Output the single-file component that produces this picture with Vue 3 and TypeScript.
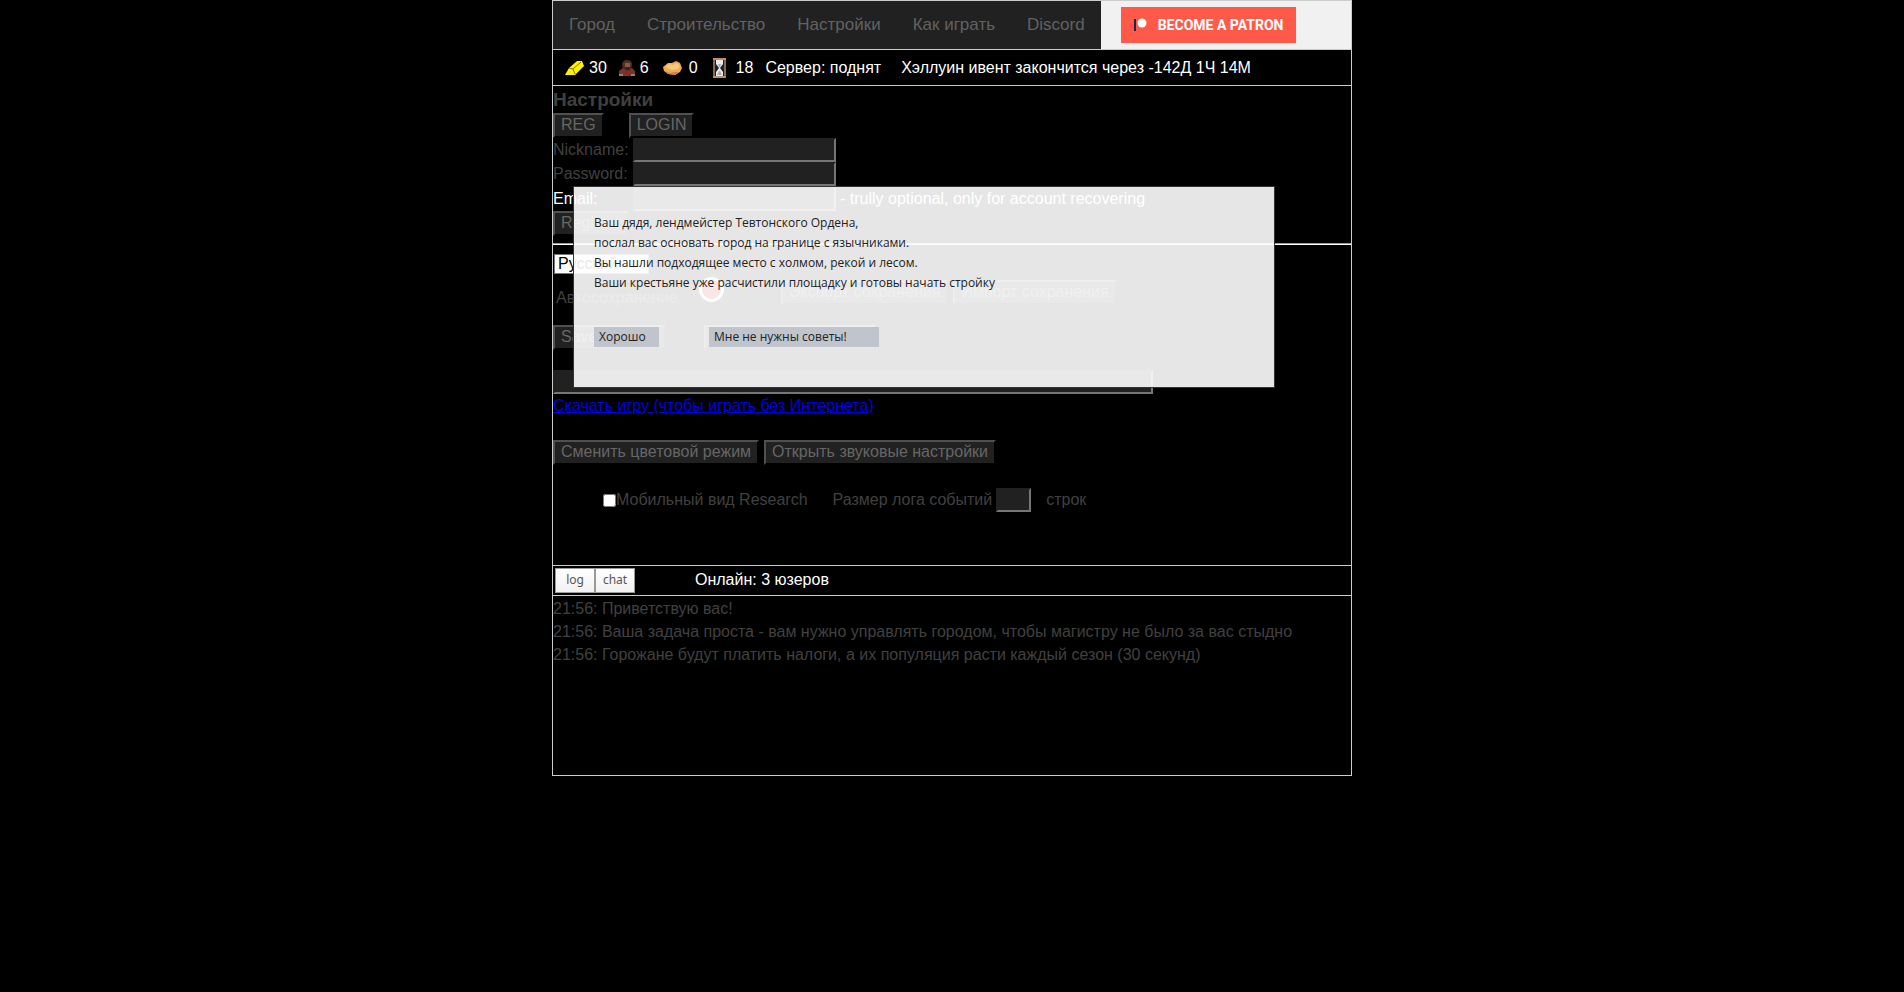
<script setup lang="ts">
import { ref } from 'vue'

const tabs: string[] = ['Город', 'Строительство', 'Настройки', 'Как играть', 'Discord']

const nickname = ref('')
const password = ref('')
const email = ref('')
const language = ref('ru')
const autosave = ref(false)
const saveText = ref('')
const mobileView = ref(false)
const logSize = ref('')

const log: string[] = [
  '21:56: Приветствую вас!',
  '21:56: Ваша задача проста - вам нужно управлять городом, чтобы магистру не было за вас стыдно',
  '21:56: Горожане будут платить налоги, а их популяция расти каждый сезон (30 секунд)',
]

const intro: string[] = [
  'Ваш дядя, лендмейстер Тевтонского Ордена,',
  'послал вас основать город на границе с язычниками.',
  'Вы нашли подходящее место с холмом, рекой и лесом.',
  'Ваши крестьяне уже расчистили площадку и готовы начать стройку',
]
</script>

<template>
  <div class="game">
    <nav class="nav">
      <a v-for="tab in tabs" :key="tab" href="#" class="nav-link">{{ tab }}</a>
      <a href="#" class="patron">
        <svg class="patron-logo" width="14" height="14" viewBox="0 0 14 14" aria-hidden="true">
          <rect x="0" y="1" width="2" height="12" fill="#17284b" />
          <circle cx="8" cy="5" r="4.5" fill="#fff" />
        </svg>
        <span>BECOME A PATRON</span>
      </a>
    </nav>

    <div class="status">
      <span class="stat">
        <svg width="20" height="16" viewBox="0 0 20 16" aria-hidden="true">
          <path d="M0 15 L4 8 L12 1 L17 1 L19 6 L10 15 Z" fill="#fff200" />
          <path d="M4 8 L8 9 L16 2 M8 9 L10 14" fill="none" stroke="#5c5700" stroke-width="0.8" />
        </svg>30
      </span>
      <span class="stat">
        <svg width="17" height="18" viewBox="0 0 17 18" aria-hidden="true">
          <path d="M0 17 V12 L4 9 H13 L16 12 V17 Z" fill="#7a3329" />
          <path d="M3 5 Q4 1 8 1 Q13 1 13 6 L12 10 L9 12 L4 10 Z" fill="#4f2f24" />
          <path d="M6 4 H11 V8 L9 10 H8 L6 8 Z" fill="#8a5a45" />
          <path d="M6 8 H11 L10 11 H7 Z" fill="#35201a" />
          <path d="M0 15 H4 V17 H0 Z M12 15 H16 V17 H12 Z" fill="#96817b" />
          <path d="M6 12 H11 V16 H6 Z" fill="#8f271f" />
        </svg>6
      </span>
      <span class="stat">
        <svg width="24" height="16" viewBox="0 0 24 16" aria-hidden="true">
          <path d="M2 7 L7 3 L11 3 L15 1 L19 3 L21 8 L19 12 L14 15 L7 14 L3 11 Z" fill="#eeaa58" />
          <path d="M4 7 L8 4 L12 5 L16 3 L19 6 L17 9 L11 10 Z" fill="#f8c878" />
          <path d="M4 11 L9 13 L14 12 L18 12 L14 15 L7 14 Z" fill="#d08238" />
        </svg>0
      </span>
      <span class="stat">
        <svg width="22" height="20" viewBox="0 0 22 20" aria-hidden="true">
          <path d="M4 1 H15 V19 H4 Z" fill="#1b2228" />
          <path d="M3 0 H16 V2 H3 Z M3 18 H16 V20 H3 Z" fill="#c08c6c" />
          <path d="M3 2 H5 V18 H3 Z M14 2 H16 V18 H14 Z" fill="#8d6650" />
          <path d="M6 2 H13 V6 L10 10 L13 14 V18 H6 V14 L9 10 L6 6 Z" fill="#e6ebef" />
          <path d="M8 6 H11 L10 9 H9 Z M7 17 L9 13 H10 L12 17 Z" fill="#a9aeb3" />
        </svg>18
      </span>
      <span>Сервер: поднят</span>
      <span class="event">Хэллуин ивент закончится через -142Д 1Ч 14М</span>
    </div>

    <main class="settings">
      <h3>Настройки</h3>
      <div class="row modes">
        <button type="button" class="btn">REG</button>
        <button type="button" class="btn">LOGIN</button>
      </div>
      <form @submit.prevent>
        <div class="row">
          <label for="nickname" class="field-label">Nickname:</label>
          <input id="nickname" v-model="nickname" type="text" class="field" />
        </div>
        <div class="row">
          <label for="password" class="field-label">Password:</label>
          <input id="password" v-model="password" type="password" class="field" />
        </div>
        <div class="row bright">
          <label for="email" class="field-label">Email:</label>
          <input id="email" v-model="email" type="text" class="field" />
          <span class="hint">- trully optional, only for account recovering</span>
        </div>
        <div class="row">
          <button type="submit" class="btn">Register</button>
        </div>
      </form>
      <hr />
      <select v-model="language" class="language" aria-label="Язык">
        <option value="ru">Русский</option>
        <option value="en">English</option>
      </select>
      <div class="row autosave">
        <label for="autosave" class="autosave-label">Автосохранение</label>
        <input id="autosave" v-model="autosave" type="checkbox" class="record" />
        <div class="row transfer">
          <button type="button" class="btn">Экспорт сохранения</button>
          <button type="button" class="btn">Импорт сохранения</button>
        </div>
      </div>
      <div class="row cloud">
        <button type="button" class="btn">Save to cloud</button>
        <button type="button" class="btn load">Load from cloud</button>
      </div>
      <div class="row">
        <input v-model="saveText" type="text" class="field save-text" aria-label="Сохранение" />
      </div>
      <div class="row">
        <a href="#" class="download">Скачать игру (чтобы играть без Интернета)</a>
      </div>
      <div class="row looks">
        <button type="button" class="btn">Сменить цветовой режим</button>
        <button type="button" class="btn">Открыть звуковые настройки</button>
      </div>
      <div class="row options">
        <input id="mobile" v-model="mobileView" type="checkbox" class="tick" />
        <label for="mobile">Мобильный вид Research</label>
        <label for="logsize" class="size-label">Размер лога событий</label>
        <input id="logsize" v-model="logSize" type="text" class="field size" />
        <span class="unit">строк</span>
      </div>
    </main>

    <div class="logbar">
      <button type="button" class="tab">log</button>
      <button type="button" class="tab">chat</button>
      <span class="online">Онлайн: 3 юзеров</span>
    </div>
    <div class="log">
      <div v-for="line in log" :key="line">{{ line }}</div>
    </div>

    <div class="dialog" role="dialog" aria-label="Вступление">
      <p v-for="line in intro" :key="line">{{ line }}</p>
      <div class="answers">
        <button type="button" class="answer">Хорошо</button>
        <button type="button" class="answer wide">Мне не нужны советы!</button>
      </div>
    </div>
  </div>
</template>

<style>
body {
  background: #000;
}
</style>

<style scoped>
* {
  box-sizing: border-box;
}

.game {
  position: relative;
  max-width: 800px;
  margin: 0 auto;
  border: 1px solid #ccc;
  color: #404040;
  font: 16px/24px 'Liberation Sans', Arial, sans-serif;
}

button,
input,
select {
  margin: 0;
  font: inherit;
  border-radius: 0;
}

.nav {
  display: flex;
  align-items: center;
  background: #f1f1f1;
  border-bottom: 1px solid #ccc;
}

.nav-link {
  padding: 12px 16px;
  background: #212121;
  color: #616161;
  font-size: 17px;
  text-decoration: none;
}

.patron {
  display: flex;
  align-items: center;
  gap: 10px;
  height: 36px;
  margin-left: 20px;
  padding: 0 13px;
  background: #ff5a49;
  color: #fff;
  font: bold 14px/36px Roboto, sans-serif;
  text-decoration: none;
}

.status {
  display: flex;
  align-items: center;
  gap: 12px;
  height: 36px;
  padding-left: 12px;
  border-bottom: 1px solid #ccc;
  color: #fff;
}

.stat {
  display: flex;
  align-items: center;
  gap: 4px;
}

.event {
  margin-left: 8px;
}

.settings {
  height: 479px;
}

h3 {
  margin: 0;
  padding: 2px 0 1px;
  font-size: 19px;
  line-height: 24px;
}

.row {
  display: flex;
  align-items: center;
}

.btn {
  height: 25px;
  padding: 0 6px 2px;
  border: 2px solid;
  border-color: #505050 #000 #000 #505050;
  background: #212121;
  background-clip: padding-box;
  color: #666;
  line-height: 19px;
  white-space: nowrap;
}

.modes {
  gap: 25px;
}

.field-label {
  width: 80px;
}

.field {
  width: 203px;
  height: 24px;
  padding: 0 2px;
  border: 2px solid;
  border-color: #212121 #767676 #767676 #212121;
  background: #212121;
  color: #666;
}

.bright {
  padding-top: 1px;
  color: #fff;
}

.hint {
  margin-left: 4px;
}

hr {
  height: 2px;
  margin: 7px 0 9px;
  border: 0;
  border-top: 1px solid #999;
  background: #fff;
}

.language {
  display: block;
  width: 95px;
  height: 20px;
  margin-left: 1px;
  padding: 0 3px;
  appearance: none;
  border: 1px solid #767676;
  background: #fff;
  color: #000;
  line-height: 18px;
}

.autosave {
  align-items: flex-start;
  margin-top: 3px;
}

.autosave-label {
  width: 146px;
  padding: 9px 0 0 3px;
}

.record {
  width: 25px;
  height: 25px;
  margin-right: 57px;
  appearance: none;
  border: 3px solid #fff;
  border-radius: 50%;
  background: #c00000;
}

.transfer {
  gap: 5px;
  margin-top: 3px;
}

.cloud {
  gap: 38px;
  margin: 15px 0 20px;
}

.load {
  width: 172px;
  text-align: left;
}

.save-text {
  width: 600px;
  max-width: 100%;
}

.download {
  color: #0000e0;
}

.looks {
  gap: 5px;
  margin-top: 22px;
}

.options {
  margin: 23px 0 0 50px;
}

.tick {
  width: 13px;
  height: 13px;
}

.size-label {
  margin: 0 4px 0 25px;
}

.size {
  width: 35px;
}

.unit {
  margin-left: 15px;
}

.logbar {
  display: flex;
  align-items: center;
  height: 31px;
  padding-left: 2px;
  border: solid #ccc;
  border-width: 1px 0;
  color: #fff;
}

.tab {
  width: 40px;
  height: 25px;
  padding: 0 0 2px;
  border: 1px solid #999;
  background: linear-gradient(#fff, #f1f1f1);
  color: #555;
  font: 12px/20px 'Noto Sans', sans-serif;
}

.online {
  margin-left: 60px;
  padding-bottom: 2px;
}

.log {
  min-height: 179px;
  padding-top: 1px;
  line-height: 23px;
}

.dialog {
  position: absolute;
  top: 185px;
  left: 20px;
  width: 702px;
  max-width: 100%;
  padding: 26px 20px 40px;
  border: 1px solid #333;
  background: rgba(255, 255, 255, 0.9);
  background-clip: padding-box;
  color: #222;
  font: 12px/20px 'Open Sans', sans-serif;
}

.dialog p {
  margin: 0;
}

.answers {
  display: flex;
  gap: 50px;
  margin-top: 34px;
}

.answer {
  width: 65px;
  height: 20px;
  padding: 0 5px;
  border: 0;
  background: #c0c4cc;
  color: #222;
  text-align: left;
}

.wide {
  width: 170px;
}
</style>
